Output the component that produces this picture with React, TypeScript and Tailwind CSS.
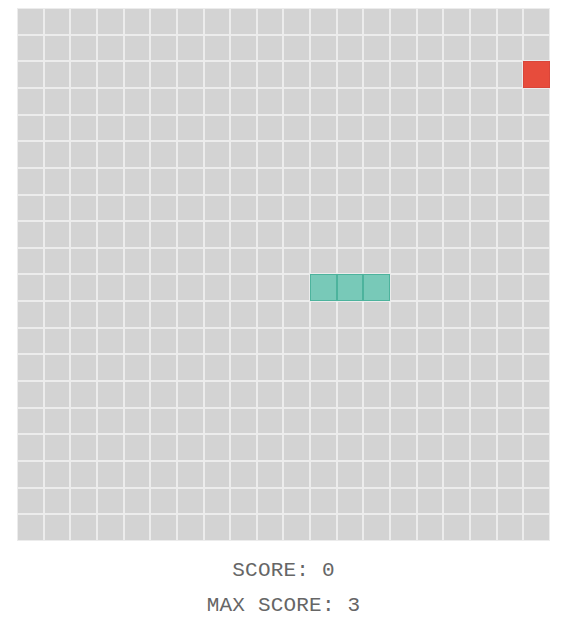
const SIZE = 20;
const snake = [
  [11, 10],
  [12, 10],
  [13, 10],
];
const food = [19, 2];

function cellClass(x: number, y: number) {
  if (snake.some(([sx, sy]) => sx === x && sy === y)) {
    return 'bg-[#78c9b8] border-[#4db39d]';
  }
  if (food[0] === x && food[1] === y) {
    return 'bg-[#e74c3c] border-[#d9463a]';
  }
  return 'bg-[#d3d3d3] border-[#ececec]';
}

export default function App() {
  const cells = [];
  for (let y = 0; y < SIZE; y++) {
    for (let x = 0; x < SIZE; x++) {
      cells.push(<div key={`${x}-${y}`} className={`border ${cellClass(x, y)}`} />);
    }
  }

  return (
    <div className="w-[567px] bg-white pt-2 flex flex-col items-center">
      <div className="w-[533px] h-[533px] grid grid-cols-[repeat(20,1fr)] grid-rows-[repeat(20,1fr)]">
        {cells}
      </div>
      <div className="mt-[12px] flex flex-col items-center text-[21px] leading-[35px] text-[#666] font-['Liberation_Mono',monospace] tracking-[0.2px]">
        <p>SCORE: 0</p>
        <p>MAX SCORE: 3</p>
      </div>
    </div>
  );
}
